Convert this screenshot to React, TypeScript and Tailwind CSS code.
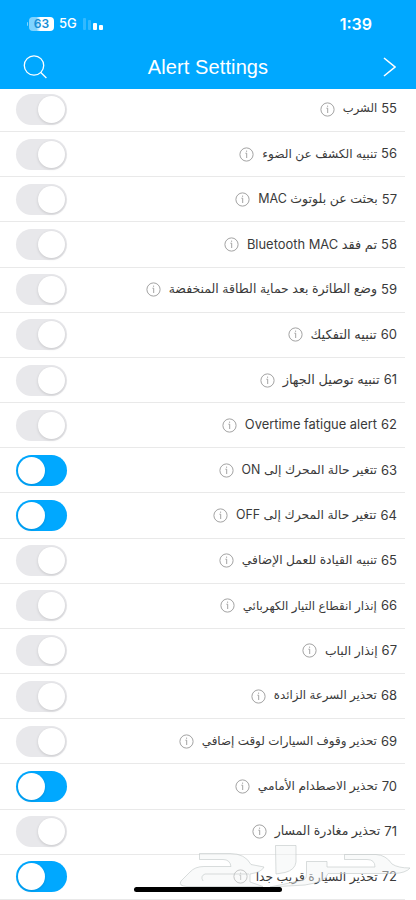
type Alert = { id: number; label: string; size?: string; on?: boolean };

const alerts: Alert[] = [
  { id: 55, label: 'الشرب', size: 'text-[11.6px]' },
  { id: 56, label: 'تنبيه الكشف عن الضوء', size: 'text-[12.2px]' },
  { id: 57, label: 'بحثت عن بلوتوث MAC', size: 'text-[12.5px]' },
  { id: 58, label: 'تم فقد Bluetooth MAC', size: 'text-[12.9px]' },
  { id: 59, label: 'وضع الطائرة بعد حماية الطاقة المنخفضة', size: 'text-[12.5px]' },
  { id: 60, label: 'تنبيه التفكيك' },
  { id: 61, label: 'تنبيه توصيل الجهاز' },
  { id: 62, label: 'Overtime fatigue alert', size: 'text-[12.9px]' },
  { id: 63, label: 'تتغير حالة المحرك إلى ON', size: 'text-[12.4px]', on: true },
  { id: 64, label: 'تتغير حالة المحرك إلى OFF', size: 'text-[12.4px]', on: true },
  { id: 65, label: 'تنبيه القيادة للعمل الإضافي', size: 'text-[12.3px]' },
  { id: 66, label: 'إنذار انقطاع التيار الكهربائي', size: 'text-[11.9px]' },
  { id: 67, label: 'إنذار الباب', size: 'text-[12.4px]' },
  { id: 68, label: 'تحذير السرعة الزائدة', size: 'text-[11.8px]' },
  { id: 69, label: 'تحذير وقوف السيارات لوقت إضافي', size: 'text-[11.9px]' },
  { id: 70, label: 'تحذير الاصطدام الأمامي', size: 'text-[12.2px]', on: true },
  { id: 71, label: 'تحذير مغادرة المسار', size: 'text-[12.5px]' },
  { id: 72, label: 'تحذير السيارة قريب جدا', size: 'text-[12.3px]', on: true },
];

const InfoIcon = () => (
  <svg className="size-[15px] shrink-0" viewBox="0 0 15 15" fill="none" stroke="#999" strokeWidth="0.9">
    <circle cx="7.5" cy="7.5" r="6.6" />
    <path d="M6.4 6.2H7.7V11M7.6 3.6V4.8" />
  </svg>
);

const Toggle = ({ on }: { on?: boolean }) => (
  <button
    role="switch"
    aria-checked={!!on}
    className={`flex h-[31px] w-[51px] shrink-0 items-center rounded-full px-0.5 ${
      on ? 'justify-end bg-[#00a8ff]' : 'justify-start bg-[#e8e8eb]'
    }`}
  >
    <span className="size-[27px] rounded-full bg-white shadow-[0_1px_3px_rgba(0,0,0,0.14)]" />
  </button>
);

const AlertRow = ({ alert }: { alert: Alert }) => (
  <li dir="rtl" className="mr-[11px] flex h-[45.17px] items-center border-b border-[#e9e9e9] pr-2 pl-4">
    <div className="flex grow items-center whitespace-nowrap text-[13px] text-[#3a3a3a]">
      <span>{alert.id}</span>
      <span className={`mr-[4px] ${alert.size ?? ''}`}>{alert.label}</span>
      <span className="mr-2">
        <InfoIcon />
      </span>
    </div>
    <Toggle on={alert.on} />
  </li>
);

const StatusBar = () => (
  <div className="flex h-[47px] items-center justify-between pr-11 pl-[27px]">
    <div className="flex items-center">
      <span className="mr-px h-1 w-px rounded-l bg-white/50" />
      <span className="flex h-[14px] w-[25px] items-center justify-center rounded-[4px] bg-linear-to-r from-white/50 from-30% to-white to-45% text-[12px] font-semibold text-[#168fd6]">
        63
      </span>
      <span className="ml-[5px] text-[13px] font-medium text-white">5G</span>
      <span className="mt-px ml-[6px] flex h-3 items-end gap-[2px]">
        <span className="h-3 w-[3px] rounded-[1px] bg-white/20" />
        <span className="h-[10px] w-[3px] rounded-[1px] bg-white/20" />
        <span className="h-[7px] w-[4px] rounded-[1px] bg-white" />
        <span className="h-[5px] w-[4px] rounded-[1px] bg-white" />
      </span>
    </div>
    <span className="text-[16px] font-semibold text-white">1:39</span>
  </div>
);

const Watermark = () => (
  <svg
    className="pointer-events-none absolute top-[840px] left-[170px]"
    width="246"
    height="50"
    viewBox="170 840 246 50"
    fill="#f2f5f5"
    fillOpacity="0.45"
    stroke="#bfc6c6"
    strokeOpacity="0.75"
    strokeWidth="0.8"
  >
    <path d="M199.5 853.5H230Q245 853.5 251 864.5L264 867Q262 872 250 874V882L263 886.5H187Q178 886 181 881L190 872Q195 866.5 204 866.5H231Q230 859.5 223 859.5H199.5Z" />
    <path d="M249 874H205Q200 876 203 881" fill="none" />
    <path d="M275.5 845.5H296V862Q295 870 285 872.5L276 874Z" />
    <path d="M344.5 854.5H376Q386 855 392 864Q398 868 410 868Q406 873 394 873.5H328Q326 882 305 885L270 887L304 880Q307 878 306.5 873V861.5H327V867H375Q375 859.5 367 859.5H344.5Z" />
  </svg>
);

const App = () => {
  return (
    <div className="relative flex h-[900px] w-[416px] flex-col overflow-hidden bg-white font-['Inter','DejaVu_Sans',sans-serif]">
      <header className="h-[89px] shrink-0 bg-[#00a8ff] text-white">
        <StatusBar />
        <div className="flex h-10 items-center pr-5 pl-[23px]">
          <div className="flex-1">
            <svg className="size-6" viewBox="0 0 24 24" fill="none" stroke="currentColor" strokeWidth="1.3">
              <circle cx="11" cy="10.5" r="9.7" />
              <path d="M17.8 17.5L23.4 23" />
            </svg>
          </div>
          <h1 className="mr-[3px] font-['Liberation_Sans',sans-serif] text-[20px] tracking-[0.1px]">Alert Settings</h1>
          <div className="flex flex-1 justify-end">
            <svg className="h-5 w-[13px]" viewBox="0 0 13 20" fill="none" stroke="currentColor" strokeWidth="1.6">
              <path d="M1 1L12 10L1 19" />
            </svg>
          </div>
        </div>
      </header>

      <main className="grow overflow-hidden">
        <ul className="-mt-[2px]">
          {alerts.map((alert) => (
            <AlertRow key={alert.id} alert={alert} />
          ))}
        </ul>
      </main>

      <Watermark />
      <div className="absolute top-[887px] left-[134px] h-[5px] w-[148px] rounded-full bg-black" />
    </div>
  );
};

export default App;
